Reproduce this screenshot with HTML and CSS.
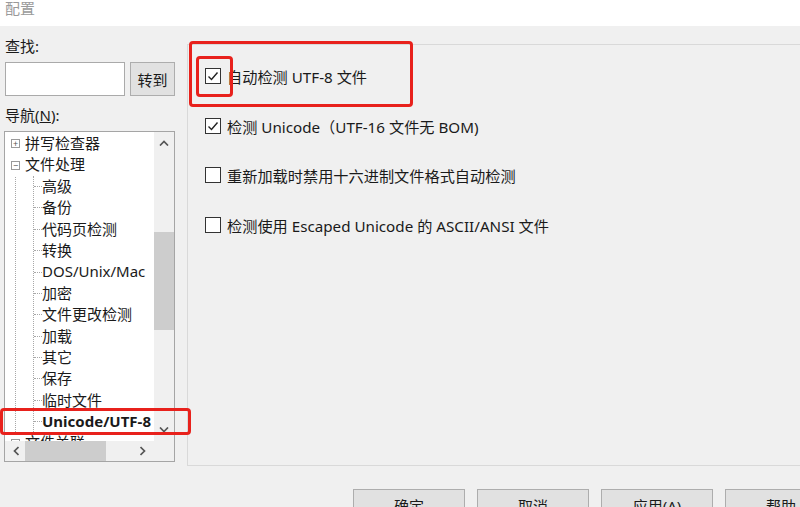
FILE: index.html
```html
<!DOCTYPE html>
<html>
    <head>
        <meta charset="utf-8">
        <title>配置</title>
        <link rel="stylesheet" href="styles.css">
    </head>
    <body>
        <div class="titlebar">配置</div>
        <div class="main">
            <div class="side">
                <div class="label">查找:</div>
                <div class="find-row">
                    <div class="input"></div>
                    <div class="btn btn-go">转到</div>
                </div>
                <div class="label label-nav">导航(<u>N</u>):</div>
                <div class="tree">
                    <div class="tree-view">
                        <div class="tree-top">
                            <div class="row top"><span class="box">+</span>拼写检查器</div>
                            <div class="row top"><span class="box">−</span>文件处理</div>
                            <div class="children">
                                <div class="row child">高级</div>
                                <div class="row child">备份</div>
                                <div class="row child">代码页检测</div>
                                <div class="row child">转换</div>
                                <div class="row child">DOS/Unix/Mac</div>
                                <div class="row child">加密</div>
                                <div class="row child">文件更改检测</div>
                                <div class="row child">加载</div>
                                <div class="row child">其它</div>
                                <div class="row child">保存</div>
                                <div class="row child">临时文件</div>
                                <div class="row child selected">Unicode/UTF-8</div>
                            </div>
                            <div class="row top"><span class="box">+</span>文件关联</div>
                        </div>
                    </div>
                    <div class="vscroll">
                        <svg class="arrow" width="10" height="6" viewBox="0 0 10 6"><polyline points="1,5.5 5,1.5 9,5.5" fill="none" stroke="#555" stroke-width="1.7"/></svg>
                        <div class="vtrack"><div class="vthumb"></div></div>
                        <svg class="arrow" width="10" height="6" viewBox="0 0 10 6"><polyline points="1,0.5 5,4.5 9,0.5" fill="none" stroke="#555" stroke-width="1.7"/></svg>
                    </div>
                    <div class="hscroll">
                        <svg class="arrow" width="6" height="10" viewBox="0 0 6 10"><polyline points="5.5,1 1.5,5 5.5,9" fill="none" stroke="#555" stroke-width="1.7"/></svg>
                        <div class="htrack"><div class="hthumb"></div></div>
                        <svg class="arrow" width="6" height="10" viewBox="0 0 6 10"><polyline points="0.5,1 4.5,5 0.5,9" fill="none" stroke="#555" stroke-width="1.7"/></svg>
                    </div>
                    <div class="corner"></div>
                </div>
            </div>
            <div class="panel">
                <div class="option">
                    <span class="check on"><svg width="14" height="14" viewBox="0 0 14 14"><polyline points="2.5,7.5 5.5,10.5 11.5,3.5" fill="none" stroke="#222" stroke-width="1.4"/></svg></span>
                    自动检测 UTF-8 文件
                </div>
                <div class="option">
                    <span class="check on"><svg width="14" height="14" viewBox="0 0 14 14"><polyline points="2.5,7.5 5.5,10.5 11.5,3.5" fill="none" stroke="#222" stroke-width="1.4"/></svg></span>
                    检测 Unicode（UTF-16 文件无 BOM)
                </div>
                <div class="option">
                    <span class="check"></span>
                    重新加载时禁用十六进制文件格式自动检测
                </div>
                <div class="option">
                    <span class="check"></span>
                    检测使用 Escaped Unicode 的 ASCII/ANSI 文件
                </div>
            </div>
        </div>
        <div class="footer">
            <div class="btn btn-foot">确定</div>
            <div class="btn btn-foot">取消</div>
            <div class="btn btn-foot">应用(A)</div>
            <div class="btn btn-foot">帮助</div>
        </div>

        <!-- red annotation boxes -->
        <div class="mark mark-group"></div>
        <div class="mark mark-check"></div>
        <div class="mark mark-node"></div>
    </body>
</html>
```

FILE: styles.css
```css
*{
    padding: 0;
    margin: 0;
    box-sizing: border-box;
}
html, body { width: 800px; height: 507px; overflow: hidden; }
body {
    background-color: #f0f0f0;
    font-family: "Noto Sans", "Noto Sans CJK SC", sans-serif;
    font-size: 15px;
    color: #1a1a1a;
    position: relative;
}
.titlebar {
    height: 26px;
    background-color: #fff;
    color: #9a9a9a;
    padding-left: 5px;
    line-height: 17px;
}
.main { display: flex; height: 440px; }
.side { width: 187px; padding-left: 4px; flex-shrink: 0; }
.label { line-height: 20px; margin-top: 10px; padding-left: 1px; }
.label-nav { margin-top: 9px; }
.find-row { display: flex; margin-top: 6px; padding-left: 1px; }
.input {
    width: 120px;
    height: 34px;
    background-color: #fff;
    border: 1px solid #aaa;
}
.btn {
    background-color: #e1e1e1;
    border: 1px solid #adadad;
    display: flex;
    align-items: center;
    justify-content: center;
}
.btn-go { width: 45px; height: 34px; margin-left: 5px; }

.tree {
    margin-top: 6px;
    width: 171px;
    height: 331px;
    border: 1px solid #a5a5a5;
    background-color: #fff;
    display: grid;
    grid-template-columns: 1fr 20px;
    grid-template-rows: 1fr 20px;
}
.tree-view { overflow: hidden; padding-top: 1px; }
.tree-top {
    margin-left: 10px;
    border-left: 1px dotted #a8a8a8;
}
.row {
    height: 21.4px;
    line-height: 21.4px;
    white-space: nowrap;
    display: flex;
    align-items: center;
}
.top { margin-left: -5px; background-color: #fff; }
.box {
    width: 9px;
    height: 9px;
    border: 1px solid #9a9a9a;
    color: #555;
    font-size: 9px;
    line-height: 7px;
    text-align: center;
    margin-right: 5px;
    flex-shrink: 0;
    background-color: #fff;
}
.children {
    margin-left: 17px;
    border-left: 1px dotted #a8a8a8;
}
.child::before {
    content: "";
    width: 8px;
    border-top: 1px dotted #a8a8a8;
}
.selected { font-weight: bold; }

.vscroll {
    background-color: #f0f0f0;
    display: flex;
    flex-direction: column;
    align-items: center;
}
.vscroll .arrow { margin: 8px 0; }
.vtrack { flex: 1; width: 100%; }
.vthumb { margin-top: 78px; height: 98px; background-color: #cdcdcd; }
.hscroll {
    background-color: #f0f0f0;
    display: flex;
    align-items: center;
    padding: 0 8px;
}
.htrack { flex: 1; height: 100%; padding: 0 6px; }
.hthumb { width: 81px; height: 100%; background-color: #cdcdcd; }
.corner { background-color: #f0f0f0; }

.panel {
    flex: 1;
    margin-top: 18px;
    border-top: 1px solid #d9d9d9;
    border-left: 1px solid #d9d9d9;
    border-bottom: 1px solid #d9d9d9;
    padding: 21px 0 0 17px;
    display: flex;
    flex-direction: column;
    gap: 29.7px;
}
.option {
    display: flex;
    align-items: center;
    height: 20px;
    white-space: nowrap;
    font-size: 15.2px;
}
.check {
    width: 16px;
    height: 16px;
    border: 1px solid #333;
    background-color: #fff;
    margin-right: 6px;
    display: flex;
    align-items: center;
    justify-content: center;
}

.footer {
    display: flex;
    gap: 12px;
    padding: 23px 0 0 353px;
}
.btn-foot { width: 112px; height: 32px; flex-shrink: 0; }

.mark {
    position: absolute;
    border: 3px solid #e8211c;
    border-radius: 4px;
}
.mark-group { left: 189px; top: 41px; width: 224px; height: 66px; }
.mark-check { left: 196px; top: 56px; width: 37px; height: 41px; }
.mark-node { left: 0; top: 408px; width: 191px; height: 27px; }
```
